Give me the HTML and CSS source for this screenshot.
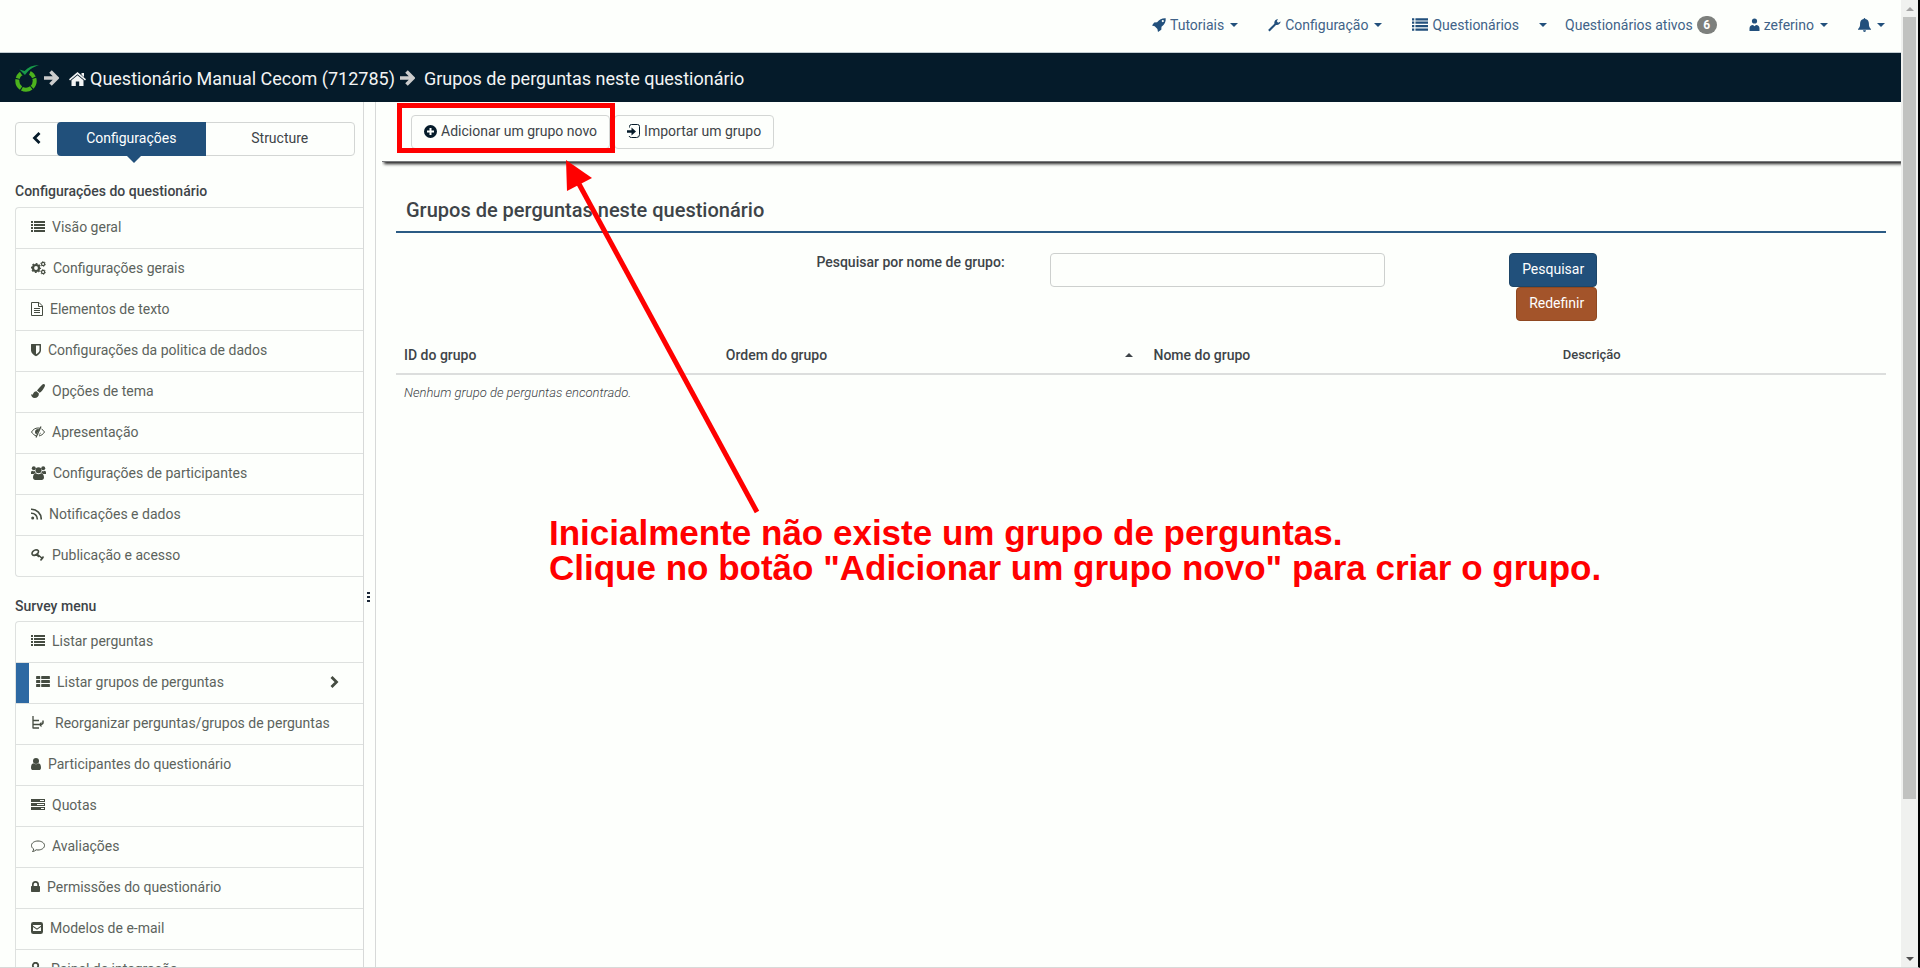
FILE: index.html
```html
<!DOCTYPE html>
<html lang="pt-BR">
<head>
<meta charset="utf-8">
<title>Grupos de perguntas neste questionário</title>
<link rel="stylesheet" href="styles.css">
</head>
<body>
<svg class="defs" aria-hidden="true">
  <symbol id="list" viewBox="0 0 14 14"><path d="M0 1h2v2H0zM3 1h11v2H3zM0 4h2v2H0zM3 4h11v2H3zM0 7h2v2H0zM3 7h11v2H3zM0 10h2v2H0zM3 10h11v2H3z"/></symbol>
  <symbol id="th-list" viewBox="0 0 14 14"><path d="M.7 1h3q.5 0 .5.5v2q0 .5-.5.5h-3q-.6 0-.6-.5v-2q0-.5.6-.5zM5.700 1h7.600q.6 0 .6.5v2q0 .5-.6.5H5.700q-.5 0-.5-.5v-2q0-.5.5-.5zM.7 5h3q.5 0 .5.5v2q0 .5-.5.5h-3q-.6 0-.6-.5v-2q0-.5.6-.5zM5.700 5h7.600q.6 0 .6.5v2q0 .5-.6.5H5.700q-.5 0-.5-.5v-2q0-.5.5-.5zM.7 9h3q.5 0 .5.5v2q0 .5-.5.5h-3q-.6 0-.6-.5v-2q0-.5.6-.5zM5.700 9h7.600q.6 0 .6.5v2q0 .5-.6.5H5.700q-.5 0-.5-.5v-2q0-.5.5-.5z"/></symbol>
  <symbol id="cogs" viewBox="0 0 15 14"><g fill="none" stroke="currentColor"><circle cx="5" cy="7" r="3" stroke-width="2.200"/><circle cx="5" cy="7" r="4.500" stroke-width="1.200" stroke-dasharray="1.900 1.634" stroke-dashoffset=".9"/><circle cx="12.100" cy="3" r="1.600" stroke-width="1.200"/><circle cx="12.100" cy="3" r="2.500" stroke-width=".7" stroke-dasharray="1.300 1.300"/><circle cx="12.100" cy="11" r="1.600" stroke-width="1.200"/><circle cx="12.100" cy="11" r="2.500" stroke-width=".7" stroke-dasharray="1.300 1.300"/></g></symbol>
  <symbol id="file" viewBox="0 0 12 14"><path d="M.5.5h7.500l3.500 3.500v9.500H.5zM7.500.5v4h4M3 6.500h6M3 8.500h6M3 10.500h6" fill="none" stroke="currentColor"/></symbol>
  <symbol id="shield" viewBox="0 0 10 14"><path fill-rule="evenodd" d="M.5 1h9q.5 0 .5.5v6c0 2.600-2.500 4.500-5 5.700C2.500 12 0 10.100 0 7.500v-6Q0 1 .5 1zM5 2.500v8.800c1.800-1 3.500-2.300 3.500-3.800v-5z"/></symbol>
  <symbol id="brush" viewBox="0 0 14 14"><path d="M12.600 0c.7 0 1.400.6 1.400 1.300 0 .5-.2 1-.4 1.400-1.800 3.400-3.300 5.200-5 6.100L6 6.400C7.500 4.500 9.500 2.300 11.400.5c.4-.3.800-.5 1.200-.5zM5.400 7.200l2.500 2.300c.1 2.800-1.700 4.500-4.200 4.500C1.300 14 .2 12.300 0 10c1 .9 1.600.8 2-.1.600-1.600 1.700-2.500 3.400-2.700z"/></symbol>
  <symbol id="eye-slash" viewBox="0 0 14 14"><path d="M5.500 11C3.500 10.400 1.700 9 .5 7 2 4.500 4.300 3 7 3q1 0 2 .3M10.500 4c1.200.7 2.200 1.700 3 3-1.300 2.200-3.200 3.600-5.500 3.900" fill="none" stroke="currentColor"/><path d="M7 4a3 3 0 0 0-1.700 5.500L8.500 4.500A3 3 0 0 0 7 4zM10 7.200A3 3 0 0 1 7.300 10z"/><path d="M10 1.500L5 12.500" stroke="currentColor" stroke-width="1.200"/></symbol>
  <symbol id="users" viewBox="0 0 15 14"><circle cx="2.800" cy="2.300" r="2"/><circle cx="12.200" cy="2.300" r="2"/><circle cx="7.500" cy="4.300" r="3"/><path d="M0 8V6.500Q0 4.700 1.300 4.700c1.200.7 1.900.7 2.700.4Q4 6.200 4.800 7.100 3.400 7.200 2.700 8H1Q0 8 0 8zM15 8V6.500q0-1.800-1.300-1.800c-1.200.7-1.900.7-2.700.4q0 1.100-.8 2 1.400.1 2.100.9H14q1 0 1 0zM2 11.500C2 9 3.300 7.200 4.800 7.200c1.600 1.300 3.800 1.300 5.400 0 1.500 0 2.800 1.800 2.800 4.300 0 1.600-1 2.500-2.300 2.500H4.300C3 14 2 13.100 2 11.500z"/></symbol>
  <symbol id="rss" viewBox="0 0 11 14"><circle cx="1.700" cy="11" r="1.500"/><path d="M0 6.300A5.800 5.800 0 0 1 6.300 12.500M0 2.300A9.700 9.700 0 0 1 10.200 12.500" fill="none" stroke="currentColor" stroke-width="1.600"/></symbol>
  <symbol id="key" viewBox="0 0 14 14"><path d="M1.300 6.500C.3 4.800 2.500 2 5 1.700c2.300 0 3 1.500 2 3.300C5.800 7 2.500 8.200 1.300 6.500zM6 6l6 5M8 7.500L6.800 9M12.500 8.500L9.500 12.500" fill="none" stroke="currentColor" stroke-width="1.600"/></symbol>
  <symbol id="tree" viewBox="0 0 13 14"><path d="M1.500 0v12.500M1.500 4.500h6M1.500 8.500h6M1.500 12h6" fill="none" stroke="currentColor" stroke-width="1.300"/><path d="M11.500 4.500v2q0 2-3 2" fill="none" stroke="currentColor" stroke-width="1.500"/><path d="M10 5.700v5.600L7 8.500z"/></symbol>
  <symbol id="user" viewBox="0 0 10 14"><circle cx="5" cy="4" r="3"/><path d="M0 10.700C0 8.200.8 6.500 2.500 6.300c1.500 1.200 3.500 1.200 5 0C9.200 6.500 10 8.200 10 10.700 10 12.200 9.200 13 8 13H2C.8 13 0 12.200 0 10.700z"/></symbol>
  <symbol id="tasks" viewBox="0 0 14 14"><path fill-rule="evenodd" d="M0 1h14v3H0zM9 2v1h4V2zM0 5h14v3H0zM6 6v1h7V6zM0 9h14v3H0zM10 10v1h3v-1z"/></symbol>
  <symbol id="comment" viewBox="0 0 14 14"><path d="M7 2c3.500 0 6.500 1.900 6.500 4.500S10.500 11 7 11q-1 0-1.800-.2C4.200 11.700 3 12.400 1.500 12.500 2.200 11.800 2.600 11 2.700 10 1.300 9.200.5 8 .5 6.500.5 3.900 3.500 2 7 2z" fill="none" stroke="currentColor"/></symbol>
  <symbol id="lock" viewBox="0 0 9 14"><path fill-rule="evenodd" d="M.7 6H1V4.500a3.500 3.500 0 0 1 7 0V6h.3q.7 0 .7.700v4.600q0 .7-.7.700H.7Q0 12 0 11.300V6.700Q0 6 .7 6zM2.700 6h3.600V4.500a1.800 1.800 0 0 0-3.600 0z"/></symbol>
  <symbol id="mail" viewBox="0 0 12 14"><path fill-rule="evenodd" d="M2.300 1h7.400Q12 1 12 3.300v7.400Q12 13 9.700 13H2.300Q0 13 0 10.700V3.300Q0 1 2.300 1zM2 4v.7l4 2.800 4-2.800V4zM2 6v4h8V6L6 8.700z"/></symbol>
  <symbol id="plug" viewBox="0 0 12 14"><circle cx="4" cy="3.500" r="2.700" fill="none" stroke="currentColor" stroke-width="1.800"/><path d="M6 5l4 7" stroke="currentColor" stroke-width="1.800"/></symbol>
  <symbol id="chevron" viewBox="0 0 9 14"><path d="M1.500 2L6.500 7l-5 5" fill="none" stroke="currentColor" stroke-width="2.800"/></symbol>
  <symbol id="arrow" viewBox="0 0 15 16"><path d="M0 8h12.500M6.500 1.500L13 8l-6.500 6.500" fill="none" stroke="currentColor" stroke-width="3.600"/></symbol>
  <symbol id="home" viewBox="0 0 17 14"><path d="M8.500 0L17 7.300l-1 1.200L8.500 2.200 1 8.500 0 7.300zM12.500 1H15v4l-2.500-2.200z"/><path d="M8.500 3.200l6 5V14h-4.300V9.500H6.800V14H2.500V8.200z"/></symbol>
  <symbol id="rocket" viewBox="0 0 14 14"><path fill-rule="evenodd" d="M13.700.2C14 3.800 12.600 6.300 9.500 8.800l-.2 3L6 14l-.6-3-2.700-2.700L0 7.600l2.200-3.200 2.900-.2C7.600 1.200 10 0 13.700.2zM10.800 2a1.100 1.100 0 1 0 0 2.200 1.100 1.100 0 0 0 0-2.200z"/></symbol>
  <symbol id="wrench" viewBox="0 0 13 14"><path d="M12.700 3.500c-.5 2.600-2.600 3.900-4.700 3.400L1.600 13.500.1 12 6.400 5.700C5.900 3.400 7.300 1.300 10 1L8.800 3.300l1.300 1.500z"/></symbol>
  <symbol id="account" viewBox="0 0 10 14"><circle cx="5" cy="3" r="2.600"/><path d="M0 13v-2.500Q0 7 3.500 7L5 8.200 6.500 7Q10 7 10 10.500V13z"/></symbol>
  <symbol id="bell" viewBox="0 0 13 14"><path d="M5.700 1q0-1 .8-1t.8 1c2.500.4 3.600 2.200 3.600 4.500 0 3 .5 4 2.100 5.500v.7H0V11c1.600-1.500 2.100-2.500 2.100-5.500C2.100 3.200 3.200 1.400 5.700 1zM5 12.300h3Q8 14 6.500 14T5 12.300z"/></symbol>
  <symbol id="plus" viewBox="0 0 13 13"><path fill-rule="evenodd" d="M6.500 0a6.500 6.500 0 1 1 0 13 6.500 6.500 0 0 1 0-13zM5.500 3v2.500H3v2h2.500V10h2V7.500H10v-2H7.500V3z"/></symbol>
  <symbol id="import" viewBox="0 0 13 14"><path d="M2.500 3.500v-1q0-2 2-2h6q2 0 2 2v8q0 3-3 3h-5q-2 0-2.500-1.500" fill="none" stroke="currentColor"/><path d="M0 6.300h4.500V3.500L9 7.500l-4.500 4V8.700H0z"/></symbol>
  <symbol id="caret" viewBox="0 0 8 4"><path d="M0 0h8L4 4z"/></symbol>
</svg>

<div class="window">
<div class="page">
  <header class="topbar">
    <a class="nav-link" href="#"><svg width="14" height="14"><use href="#rocket"/></svg>Tutoriais<svg class="caret"><use href="#caret"/></svg></a>
    <a class="nav-link" href="#"><svg width="13" height="14"><use href="#wrench"/></svg>Configuração<svg class="caret"><use href="#caret"/></svg></a>
    <a class="nav-link tight" href="#"><svg width="16" height="16"><use href="#list"/></svg>Questionários</a>
    <a class="nav-link tight" href="#" aria-label="Mais questionários"><svg class="caret"><use href="#caret"/></svg></a>
    <a class="nav-link active-surveys" href="#">Questionários ativos<span class="badge">6</span></a>
    <a class="nav-link" href="#"><svg width="11" height="14"><use href="#account"/></svg>zeferino<svg class="caret"><use href="#caret"/></svg></a>
    <a class="nav-link" href="#" aria-label="Notificações"><svg width="13" height="14"><use href="#bell"/></svg><svg class="caret"><use href="#caret"/></svg></a>
  </header>

  <nav class="breadcrumb">
    <svg class="logo" width="24" height="28" viewBox="0 0 24 28"><circle cx="11" cy="17" r="8.700" fill="none" stroke="#4cb31d" stroke-width="4" stroke-dasharray="9.900 1.030" stroke-dashoffset="3"/><path d="M3 5l4 6h7l2-5z" fill="#051b2a"/><path d="M4.500 5.500L10 11C13 6.500 17 3.500 24 1 18 1 13 3 9.600 7z" fill="#179a49"/></svg>
    <svg class="arrow" width="15" height="16"><use href="#arrow"/></svg>
    <a class="crumb" href="#"><svg width="17" height="14"><use href="#home"/></svg>Questionário Manual Cecom (712785)</a>
    <svg class="arrow" width="15" height="16"><use href="#arrow"/></svg>
    <span class="current">Grupos de perguntas neste questionário</span>
  </nav>

  <div class="body">
    <aside class="sidebar">
      <div class="tabs">
        <button class="back" aria-label="Recolher"><svg width="9" height="14"><use href="#chevron"/></svg></button>
        <button class="tab active">Configurações</button>
        <button class="tab">Structure</button>
      </div>
      <h2>Configurações do questionário</h2>
      <ul class="menu">
        <li><a href="#"><svg width="14" height="14"><use href="#list"/></svg>Visão geral</a></li>
        <li><a href="#"><svg width="15" height="14"><use href="#cogs"/></svg>Configurações gerais</a></li>
        <li><a href="#"><svg width="12" height="14"><use href="#file"/></svg>Elementos de texto</a></li>
        <li><a href="#"><svg width="10" height="14"><use href="#shield"/></svg>Configurações da politica de dados</a></li>
        <li><a href="#"><svg width="14" height="14"><use href="#brush"/></svg>Opções de tema</a></li>
        <li><a href="#"><svg width="14" height="14"><use href="#eye-slash"/></svg>Apresentação</a></li>
        <li><a href="#"><svg width="15" height="14"><use href="#users"/></svg>Configurações de participantes</a></li>
        <li><a href="#"><svg width="11" height="14"><use href="#rss"/></svg>Notificações e dados</a></li>
        <li><a href="#"><svg width="14" height="14"><use href="#key"/></svg>Publicação e acesso</a></li>
      </ul>
      <h2>Survey menu</h2>
      <ul class="menu">
        <li><a href="#"><svg width="14" height="14"><use href="#list"/></svg>Listar perguntas</a></li>
        <li class="selected"><a href="#"><svg width="14" height="14"><use href="#th-list"/></svg>Listar grupos de perguntas<svg class="go" width="9" height="14"><use href="#chevron"/></svg></a></li>
        <li><a class="wide" href="#"><svg width="14" height="14"><use href="#tree"/></svg>Reorganizar perguntas/grupos de perguntas</a></li>
        <li><a href="#"><svg width="10" height="14"><use href="#user"/></svg>Participantes do questionário</a></li>
        <li><a href="#"><svg width="14" height="14"><use href="#tasks"/></svg>Quotas</a></li>
        <li><a href="#"><svg width="14" height="14"><use href="#comment"/></svg>Avaliações</a></li>
        <li><a href="#"><svg width="9" height="14"><use href="#lock"/></svg>Permissões do questionário</a></li>
        <li><a href="#"><svg width="12" height="14"><use href="#mail"/></svg>Modelos de e-mail</a></li>
        <li><a href="#"><svg width="13" height="14"><use href="#plug"/></svg>Painel de integração</a></li>
      </ul>
    </aside>
    <div class="resizer"><svg width="3" height="10" viewBox="0 0 3 10"><path d="M0 0h3v2H0zM0 4h3v2H0zM0 8h3v2H0z"/></svg></div>

    <main class="content">
      <div class="toolbar">
        <button class="btn"><svg width="13" height="13"><use href="#plus"/></svg>Adicionar um grupo novo</button>
        <button class="btn"><svg width="13" height="14"><use href="#import"/></svg>Importar um grupo</button>
      </div>
      <section class="panel">
        <h1>Grupos de perguntas neste questionário</h1>
        <form class="search">
          <label for="q">Pesquisar por nome de grupo:</label>
          <input id="q" type="text">
          <div class="actions">
            <button class="btn primary" type="button">Pesquisar</button>
            <button class="btn reset" type="button">Redefinir</button>
          </div>
        </form>
        <table>
          <colgroup><col class="c-id"><col class="c-order"><col class="c-name"><col></colgroup>
          <thead><tr><th>ID do grupo</th><th><span class="sort">Ordem do grupo<svg class="caret up"><use href="#caret"/></svg></span></th><th>Nome do grupo</th><th class="desc">Descrição</th></tr></thead>
          <tbody><tr><td colspan="4">Nenhum grupo de perguntas encontrado.</td></tr></tbody>
        </table>
      </section>
    </main>
  </div>

  <div class="highlight"></div>
  <svg class="pointer" width="200" height="356" viewBox="0 0 200 356"><path d="M15 24L193 352" stroke="#f00" stroke-width="5"/><path d="M2 0l26 18L3 31z" fill="#f00"/></svg>
  <p class="note">Inicialmente não existe um grupo de perguntas.<br>Clique no botão "Adicionar um grupo novo" para criar o grupo.</p>
</div>
<div class="scrollbar"><svg class="sb-up" width="8" height="4"><use href="#caret"/></svg><div class="thumb"></div><svg class="sb-down" width="8" height="4"><use href="#caret"/></svg></div>
</div>
</body>
</html>
```
FILE: styles.css
```css
* { box-sizing: border-box; }
body { margin: 0; background: #fdfffc; color: #3e4448; font: 14px/20px Roboto, "Liberation Sans", sans-serif; }
svg { fill: currentColor; flex: none; }
a { color: inherit; text-decoration: none; }
button { font: inherit; color: inherit; }
.defs { display: none; }

.window { display: flex; height: 100vh; overflow: hidden; border-right: 2px solid #000; border-bottom: 1px solid #d8d9d8; }
.page { position: relative; flex: 1; min-width: 0; display: flex; flex-direction: column; }

.topbar { display: flex; justify-content: flex-end; align-items: center; height: 53px; flex: none; padding: 0 1px 3px 0; border-bottom: 1px solid #c3cdd2; color: #416388; }
.nav-link { display: flex; align-items: center; gap: 4px; padding: 0 15px; }
.nav-link svg { color: #22507c; }
.nav-link.tight { padding: 0 3px 0 15px; }
.nav-link.active-surveys { padding-right: 17px; }
.caret { width: 8px; height: 4px; margin-left: 2px; }
.badge { min-width: 20px; height: 18px; border-radius: 9px; background: #7d807d; color: #fff; font: bold 12px/18px Roboto, sans-serif; text-align: center; }

.breadcrumb { display: flex; align-items: center; height: 49px; flex: none; padding: 0 15px; gap: 5px; background: #051b2a; color: #f3f4f4; font-size: 18px; }
.breadcrumb .arrow { color: #ccc; }
.crumb { display: flex; align-items: center; gap: 4px; padding: 2px 0 0 5px; }
.current { padding: 2px 0 0 4px; }

.body { display: flex; flex: 1; min-height: 0; }
.sidebar { width: 364px; flex: none; overflow: hidden; padding: 20px 0 0 15px; border-right: 1px solid #d7d9d8; }
.tabs { display: flex; height: 34px; margin-right: 8px; border: 1px solid #d3d6d4; border-radius: 4px; }
.tabs button { padding: 0 0 2px; border: 0; background: none; }
.back { width: 41px; }
.back svg { transform: scaleX(-1); color: #051b2a; display: block; margin: auto; }
.tab { flex: 1; }
.tabs .active { position: relative; margin: -1px 0; border-radius: 4px 0 0 4px; background: #21507b; color: #fff; }
.active::after { content: ""; position: absolute; top: 100%; left: 50%; margin-left: -4px; border: 7px solid transparent; border-top-color: #21507b; }
h2 { margin: 25px 0 6px; font-size: 14px; line-height: 20px; font-weight: 500; }
.menu { list-style: none; margin: 0; padding: 0; border: 1px solid #dee1df; border-right: 0; border-radius: 4px 0 0 4px; }
.menu + h2 { margin: 19px 0 5px; }
.menu a { display: flex; align-items: center; gap: 7px; height: 40px; padding: 0 24px 2px 15px; color: #5c635c; white-space: nowrap; }
.menu a svg { color: #454c41; }
.menu li + li { border-top: 1px solid #dee1df; }
.menu a.wide { gap: 10px; }
.menu .selected a { border-left: 13px solid #2d69a3; padding-left: 7px; }
.menu .go { margin-left: auto; }
.resizer { display: flex; align-items: center; width: 12px; flex: none; padding: 124px 0 0 3px; border-right: 1px solid #d7d9d8; color: #1b2738; }

.content { flex: 1; min-width: 0; }
.toolbar { display: flex; gap: 4px; height: 60px; margin-left: 6px; padding: 13px 29px 0; border-bottom: 1px solid #77797b; box-shadow: 2px 2px 3px #222; clip-path: inset(0 0 -8px 0); }
.btn { display: flex; align-items: center; gap: 4px; height: 34px; padding: 0 12px 2px; border: 1px solid #d3d6d4; border-radius: 4px; background: #fdfffc; white-space: nowrap; }
.btn svg { color: #051b2a; }
.panel { padding: 0 15px 0 20px; }
h1 { margin: 36px 0 20px; padding: 0 10px 9px; border-bottom: 2px solid #2b5b84; font-size: 20px; line-height: 24px; font-weight: 500; }
.search { display: grid; grid-template-columns: 609fr 45fr 336fr 212fr 289fr; align-items: start; }
.search label { padding-bottom: 2px; line-height: 18px; text-align: right; font-weight: 500; }
.search input { grid-column: 3; width: 100%; height: 34px; border: 1px solid #cdd0ce; border-radius: 4px; background: #fdfffc; font: inherit; padding: 0 12px; }
.actions { display: flex; flex-direction: column; align-items: flex-end; }
.btn.primary { border-color: #1e4668; background: #21507b; color: #fff; }
.btn.reset { border-color: #8f4820; background: #a3542a; color: #fff; }
table { width: 100%; margin-top: 16px; border-collapse: collapse; table-layout: fixed; }
.c-id { width: 21.6%; }
.c-order { width: 28.7%; }
.c-name { width: 10.2%; }
th { padding: 8px; border-bottom: 2px solid #dcdedd; text-align: left; font-weight: 500; white-space: nowrap; }
th.desc { text-align: center; font-size: 13px; }
.sort { display: flex; justify-content: space-between; align-items: center; padding-right: 4px; }
.up { transform: rotate(180deg); }
td { padding: 8px; font-size: 13px; font-style: italic; font-weight: 300; }

.highlight { position: absolute; left: 397px; top: 103px; width: 218px; height: 50px; border: 5px solid #f00; }
.pointer { position: absolute; left: 564px; top: 160px; }
.note { position: absolute; left: 549px; top: 515px; margin: 0; color: #f00; font: bold 35px/35px "Liberation Sans", Arial, sans-serif; white-space: nowrap; }

.scrollbar { display: flex; flex-direction: column; align-items: center; width: 17px; flex: none; padding: 7px 0 6px; background: #f0f1ef; color: #505050; }
.sb-up { transform: rotate(180deg); color: #a3a3a3; }
.thumb { width: 13px; height: 82%; margin-top: 6px; background: #c1c2c0; }
.sb-down { margin-top: auto; }
```
